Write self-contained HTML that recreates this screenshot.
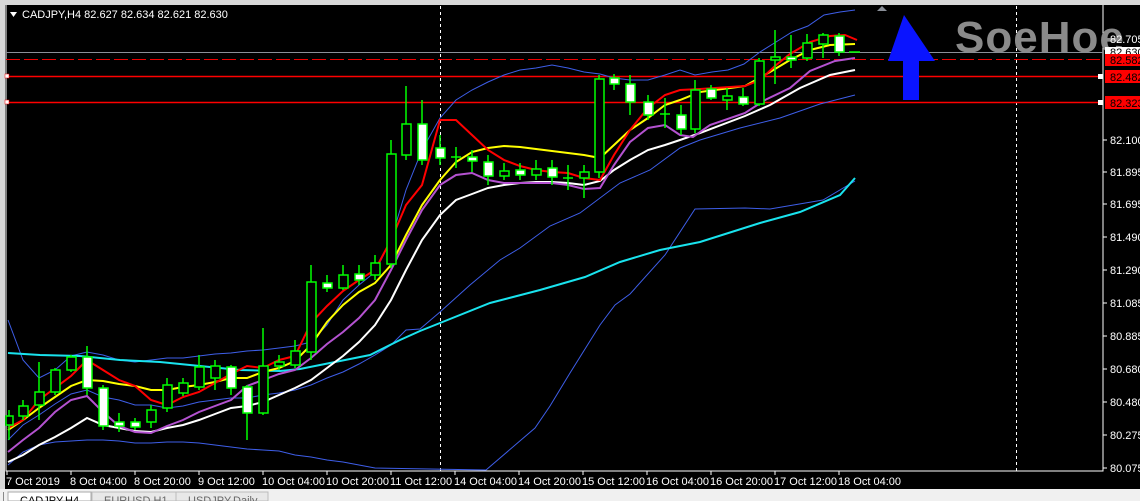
<!DOCTYPE html>
<html><head><meta charset="utf-8"><style>
html,body{margin:0;padding:0;width:1140px;height:501px;overflow:hidden;background:#f0f0f0;}
svg{display:block;font-family:"Liberation Sans",sans-serif;}
</style></head><body>
<svg width="1140" height="501" viewBox="0 0 1140 501" xmlns="http://www.w3.org/2000/svg">
<rect x="0" y="0" width="1140" height="501" fill="#d8d8d8"/>
<rect x="5" y="5" width="1135" height="484" fill="#000"/>
<!-- frame -->
<polyline points="6,5 6,471 1103,471 1103,5" fill="none" stroke="#fff" stroke-width="1"/>
<!-- dashed verticals -->
<line x1="440.5" y1="6" x2="440.5" y2="471" stroke="#fff" stroke-dasharray="3,3"/>
<line x1="1016.5" y1="6" x2="1016.5" y2="471" stroke="#fff" stroke-dasharray="3,3"/>
<!-- horizontal lines -->
<line x1="6" y1="52.5" x2="1103" y2="52.5" stroke="#8a8f98"/>
<line x1="6" y1="59.5" x2="1103" y2="59.5" stroke="#e00" stroke-dasharray="14,4"/>
<line x1="6" y1="76.5" x2="1103" y2="76.5" stroke="#f00" stroke-width="1.5"/>
<line x1="6" y1="102.5" x2="1103" y2="102.5" stroke="#f00" stroke-width="1.5"/>
<rect x="5" y="74" width="4" height="4" fill="#fff" stroke="#f00" stroke-width="0.5"/>
<rect x="5" y="100" width="4" height="4" fill="#fff" stroke="#f00" stroke-width="0.5"/>
<rect x="1098" y="74" width="5" height="5" fill="#fff"/>
<rect x="1098" y="100" width="5" height="5" fill="#fff"/>
<!-- logo -->
<text x="955" y="52" font-size="44" font-weight="bold" fill="#8a8a8a" letter-spacing="1">SoeHoe</text>
<polygon points="882,6 887,11 877,11" fill="#8a8f98"/>
<!-- arrow -->
<polygon points="904,15 888,61 935,61" fill="#0a14ff"/>
<rect x="903" y="60" width="16" height="40" fill="#0a14ff"/>
<!-- bollinger blue lines -->
<polyline fill="none" stroke="#3e5ee8" stroke-width="1" points="8,320 23,360 39,378 55,370 71,356 87,352 103,355 119,360 135,362 151,360 167,358 183,358 199,356 215,354 231,353 247,351 263,350 279,348 295,346 311,342 327,325 343,300 359,285 375,272 391,240 406,190 422,150 440,118 456,100 472,90 488,82 504,75 520,70 536,68 552,65 568,68 584,72 600,74 614,78 630,80 648,80 665,75 680,70 695,75 712,72 728,70 744,64 760,52 776,42 792,32 808,26 824,15 840,12 855,10"/>
<polyline fill="none" stroke="#3e5ee8" stroke-width="1" points="8,440 23,425 39,415 55,404 71,394 87,390 103,397 119,400 135,405 151,405 167,408 183,406 199,402 215,400 231,398 247,398 263,395 279,393 295,390 311,385 327,378 343,372 359,364 375,355 391,345 406,330 420,329 440,312 470,285 500,260 520,248 550,226 580,213 620,183 650,170 680,148 700,140 740,128 780,118 820,104 855,95"/>
<polyline fill="none" stroke="#3e5ee8" stroke-width="1" points="8,465 23,452 39,445 55,442 71,441 87,440 103,440 119,441 135,443 151,443 167,442 183,442 199,443 215,445 231,447 247,449 263,450 279,451 295,455 311,457 327,460 343,462 359,465 375,468 486,470 535,428 550,406 570,373 600,325 615,305 630,294 665,255 695,209 745,208 770,209 823,200 855,181"/>
<!-- cyan -->
<polyline fill="none" stroke="#19e3ee" stroke-width="2" points="8,353 40,355 80,356 120,360 160,362 200,366 240,370 280,371 300,369 330,363 370,355 400,340 420,331 440,323 490,303 540,290 585,277 620,262 660,250 700,242 760,223 800,212 840,195 855,178"/>
<!-- white -->
<polyline fill="none" stroke="#fff" stroke-width="2" points="8,462 23,455 39,445 55,437 71,428 87,418 103,425 119,428 135,431 151,432 167,428 183,425 199,420 215,414 231,408 247,406 263,402 279,395 295,388 311,380 327,368 343,356 359,342 375,325 391,300 406,270 422,240 440,215 456,200 472,194 488,188 504,185 520,183 536,182 552,182 568,183 584,185 600,181 614,170 630,160 648,150 665,145 680,140 700,133 745,116 770,105 800,88 830,75 855,70"/>
<!-- purple -->
<polyline fill="none" stroke="#b452d0" stroke-width="2" points="8,452 23,440 39,428 55,412 71,400 87,396 103,412 119,426 135,432 151,433 167,426 183,420 199,412 215,406 231,400 247,386 263,380 279,374 295,370 311,358 327,344 343,332 359,318 375,300 391,270 406,240 422,210 440,185 456,175 472,173 488,180 504,183 520,183 536,183 552,183 568,185 584,189 600,188 614,165 630,142 648,128 665,125 680,135 693,137 710,125 745,113 765,100 790,88 810,71 835,61 855,58"/>
<!-- yellow -->
<polyline fill="none" stroke="#ffff00" stroke-width="2" points="8,430 23,420 39,408 55,397 71,386 87,380 103,381 119,384 135,386 151,390 167,390 183,387 199,385 215,382 231,378 247,378 263,372 279,368 295,361 311,345 327,322 343,305 359,292 375,283 391,265 406,235 422,205 440,180 456,162 472,152 488,148 504,146 520,147 536,149 552,151 568,153 584,155 600,158 614,145 630,130 648,118 665,105 680,100 700,92 745,86 770,72 790,60 810,50 830,45 855,44"/>
<!-- red -->
<polyline fill="none" stroke="#ff0000" stroke-width="2" points="8,428 23,420 39,400 55,388 71,376 87,360 103,370 119,380 135,386 151,400 167,405 183,397 199,392 215,383 231,374 247,366 263,368 279,360 295,356 311,323 327,306 343,291 359,280 375,270 391,240 406,205 422,185 440,120 456,120 472,135 488,150 504,160 520,166 536,170 552,172 568,173 584,178 600,180 614,155 630,130 648,108 665,95 680,90 700,89 745,86 760,80 775,66 790,54 810,42 830,36 845,35 857,40"/>
<!-- candles -->
<g stroke="#00ff00" stroke-width="1.5">
<line x1="9" y1="410" x2="9" y2="440"/><rect x="6" y="416" width="7" height="9" fill="#000"/>
<line x1="23" y1="400" x2="23" y2="420"/><rect x="19" y="406" width="9" height="10" fill="#000"/>
<line x1="39" y1="362" x2="39" y2="420"/><rect x="35" y="392" width="9" height="13" fill="#000"/>
<line x1="55" y1="368" x2="55" y2="395"/><rect x="51" y="370" width="9" height="22" fill="#000"/>
<line x1="71" y1="355" x2="71" y2="372"/><rect x="67" y="357" width="9" height="13" fill="#000"/>
<line x1="87" y1="346" x2="87" y2="395"/><rect x="83" y="357" width="9" height="31" fill="#fff"/>
<line x1="103" y1="385" x2="103" y2="430"/><rect x="99" y="388" width="9" height="38" fill="#fff"/>
<line x1="119" y1="413" x2="119" y2="432"/><rect x="115" y="422" width="9" height="4" fill="#fff"/>
<line x1="135" y1="418" x2="135" y2="430"/><rect x="131" y="422" width="9" height="5" fill="#fff"/>
<line x1="151" y1="405" x2="151" y2="428"/><rect x="147" y="410" width="9" height="12" fill="#000"/>
<line x1="167" y1="378" x2="167" y2="412"/><rect x="163" y="385" width="9" height="23" fill="#000"/>
<line x1="183" y1="378" x2="183" y2="396"/><rect x="179" y="383" width="9" height="10" fill="#000"/>
<line x1="199" y1="355" x2="199" y2="390"/><rect x="195" y="367" width="9" height="20" fill="#000"/>
<line x1="215" y1="360" x2="215" y2="390"/><rect x="211" y="366" width="9" height="12" fill="#000"/>
<line x1="231" y1="365" x2="231" y2="395"/><rect x="227" y="367" width="9" height="21" fill="#fff"/>
<line x1="247" y1="385" x2="247" y2="440"/><rect x="243" y="387" width="9" height="26" fill="#fff"/>
<line x1="263" y1="328" x2="263" y2="415"/><rect x="259" y="366" width="9" height="47" fill="#000"/>
<line x1="279" y1="355" x2="279" y2="370"/><rect x="275" y="362" width="9" height="4" fill="#000"/>
<line x1="295" y1="340" x2="295" y2="368"/><rect x="291" y="351" width="9" height="14" fill="#000"/>
<line x1="311" y1="265" x2="311" y2="360"/><rect x="307" y="282" width="9" height="70" fill="#000"/>
<line x1="327" y1="275" x2="327" y2="292"/><rect x="323" y="283" width="9" height="5" fill="#fff"/>
<line x1="343" y1="265" x2="343" y2="290"/><rect x="339" y="275" width="9" height="13" fill="#000"/>
<line x1="359" y1="265" x2="359" y2="285"/><rect x="355" y="274" width="9" height="6" fill="#fff"/>
<line x1="375" y1="255" x2="375" y2="280"/><rect x="371" y="263" width="9" height="12" fill="#000"/>
<line x1="391" y1="140" x2="391" y2="268"/><rect x="387" y="154" width="9" height="110" fill="#000"/>
<line x1="406" y1="86" x2="406" y2="160"/><rect x="402" y="124" width="9" height="31" fill="#000"/>
<line x1="422" y1="100" x2="422" y2="165"/><rect x="418" y="124" width="9" height="36" fill="#fff"/>
<line x1="440" y1="135" x2="440" y2="165"/><rect x="436" y="148" width="9" height="10" fill="#fff"/>
<line x1="456" y1="147" x2="456" y2="168"/><line x1="451" y1="157" x2="461" y2="157"/>
<line x1="472" y1="150" x2="472" y2="172"/><rect x="468" y="157" width="9" height="4" fill="#fff"/>
<line x1="488" y1="155" x2="488" y2="185"/><rect x="484" y="162" width="9" height="14" fill="#fff"/>
<line x1="504" y1="163" x2="504" y2="180"/><rect x="500" y="171" width="9" height="5" fill="#000"/>
<line x1="520" y1="163" x2="520" y2="180"/><rect x="516" y="170" width="9" height="5" fill="#fff"/>
<line x1="536" y1="160" x2="536" y2="180"/><rect x="532" y="169" width="9" height="6" fill="#000"/>
<line x1="552" y1="160" x2="552" y2="185"/><rect x="548" y="168" width="9" height="9" fill="#fff"/>
<line x1="568" y1="165" x2="568" y2="190"/><line x1="563" y1="178" x2="573" y2="178"/>
<line x1="584" y1="165" x2="584" y2="198"/><rect x="580" y="172" width="9" height="6" fill="#000"/>
<line x1="599" y1="75" x2="599" y2="178"/><rect x="595" y="79" width="9" height="93" fill="#000"/>
<line x1="614" y1="74" x2="614" y2="90"/><rect x="610" y="78" width="9" height="6" fill="#fff"/>
<line x1="630" y1="75" x2="630" y2="115"/><rect x="626" y="84" width="9" height="18" fill="#fff"/>
<line x1="648" y1="95" x2="648" y2="120"/><rect x="644" y="102" width="9" height="13" fill="#fff"/>
<line x1="665" y1="98" x2="665" y2="128"/><line x1="660" y1="114" x2="670" y2="114"/>
<line x1="681" y1="105" x2="681" y2="135"/><rect x="677" y="115" width="9" height="14" fill="#fff"/>
<line x1="695" y1="80" x2="695" y2="133"/><rect x="691" y="90" width="9" height="39" fill="#000"/>
<line x1="711" y1="85" x2="711" y2="100"/><rect x="707" y="89" width="9" height="9" fill="#fff"/>
<line x1="727" y1="88" x2="727" y2="110"/><rect x="723" y="96" width="9" height="4" fill="#000"/>
<line x1="743" y1="88" x2="743" y2="106"/><rect x="739" y="97" width="9" height="7" fill="#fff"/>
<line x1="759" y1="58" x2="759" y2="106"/><rect x="755" y="61" width="9" height="43" fill="#000"/>
<line x1="775" y1="30" x2="775" y2="84"/><rect x="771" y="57" width="9" height="3" fill="#000"/>
<line x1="791" y1="35" x2="791" y2="68"/><rect x="787" y="57" width="9" height="3" fill="#fff"/>
<line x1="807" y1="34" x2="807" y2="61"/><rect x="803" y="43" width="9" height="15" fill="#000"/>
<line x1="823" y1="33" x2="823" y2="58"/><rect x="819" y="35" width="9" height="9" fill="#000"/>
<line x1="839" y1="33" x2="839" y2="56"/><rect x="835" y="36" width="9" height="16" fill="#fff"/>
<line x1="849" y1="52" x2="860" y2="52"/>
</g>
<!-- title -->
<polygon points="10,12 17,12 13.5,17" fill="#fff"/>
<text x="22" y="18" font-size="11" fill="#fff">CADJPY,H4  82.627 82.634 82.621 82.630</text>
<!-- price axis -->
<g fill="#fff" font-size="11" stroke="none">
<text x="1110" y="43">82.705</text>
<text x="1110" y="144">82.100</text>
<text x="1110" y="176">81.895</text>
<text x="1110" y="208">81.695</text>
<text x="1110" y="241">81.490</text>
<text x="1110" y="274">81.290</text>
<text x="1110" y="307">81.085</text>
<text x="1110" y="340">80.885</text>
<text x="1110" y="373">80.680</text>
<text x="1110" y="406">80.480</text>
<text x="1110" y="439">80.275</text>
<text x="1110" y="472">80.075</text>
</g>
<g stroke="#fff">
<line x1="1103" y1="140" x2="1107" y2="140"/><line x1="1103" y1="172" x2="1107" y2="172"/><line x1="1103" y1="204" x2="1107" y2="204"/><line x1="1103" y1="237" x2="1107" y2="237"/><line x1="1103" y1="270" x2="1107" y2="270"/><line x1="1103" y1="303" x2="1107" y2="303"/><line x1="1103" y1="336" x2="1107" y2="336"/><line x1="1103" y1="369" x2="1107" y2="369"/><line x1="1103" y1="402" x2="1107" y2="402"/><line x1="1103" y1="435" x2="1107" y2="435"/><line x1="1103" y1="468" x2="1107" y2="468"/>
</g>
<rect x="1105" y="47" width="35" height="10" fill="#fff"/>
<text x="1110" y="56" font-size="11" fill="#000">82.630</text>
<rect x="1105" y="54" width="35" height="12" fill="#f00"/>
<text x="1110" y="64" font-size="11" fill="#000">82.582</text>
<rect x="1105" y="70" width="35" height="13" fill="#f00"/>
<text x="1110" y="81" font-size="11" fill="#000">82.482</text>
<rect x="1105" y="96" width="35" height="13" fill="#f00"/>
<text x="1110" y="107" font-size="11" fill="#000">82.323</text>
<!-- time axis -->
<g stroke="#fff">
<line x1="7" y1="471" x2="7" y2="475"/><line x1="71" y1="471" x2="71" y2="475"/><line x1="135" y1="471" x2="135" y2="475"/><line x1="199" y1="471" x2="199" y2="475"/><line x1="263" y1="471" x2="263" y2="475"/><line x1="327" y1="471" x2="327" y2="475"/><line x1="391" y1="471" x2="391" y2="475"/><line x1="455" y1="471" x2="455" y2="475"/><line x1="519" y1="471" x2="519" y2="475"/><line x1="583" y1="471" x2="583" y2="475"/><line x1="647" y1="471" x2="647" y2="475"/><line x1="711" y1="471" x2="711" y2="475"/><line x1="775" y1="471" x2="775" y2="475"/><line x1="839" y1="471" x2="839" y2="475"/>
</g>
<g fill="#fff" font-size="11">
<text x="6" y="485">7 Oct 2019</text>
<text x="70" y="485">8 Oct 04:00</text>
<text x="134" y="485">8 Oct 20:00</text>
<text x="198" y="485">9 Oct 12:00</text>
<text x="262" y="485">10 Oct 04:00</text>
<text x="326" y="485">10 Oct 20:00</text>
<text x="390" y="485">11 Oct 12:00</text>
<text x="454" y="485">14 Oct 04:00</text>
<text x="518" y="485">14 Oct 20:00</text>
<text x="582" y="485">15 Oct 12:00</text>
<text x="646" y="485">16 Oct 04:00</text>
<text x="710" y="485">16 Oct 20:00</text>
<text x="774" y="485">17 Oct 12:00</text>
<text x="838" y="485">18 Oct 04:00</text>
</g>
<!-- tabs -->
<rect x="0" y="489" width="1140" height="12" fill="#f0f0f0"/>
<rect x="3" y="492" width="1" height="9" fill="#888"/>
<rect x="8" y="492" width="83" height="9" fill="#fff" stroke="#aaa"/>
<rect x="92" y="492" width="84" height="9" fill="#e8e8e8" stroke="#bbb"/>
<rect x="176" y="492" width="92" height="9" fill="#e8e8e8" stroke="#bbb"/>
<g font-size="11">
<text x="20" y="504" fill="#000">CADJPY,H4</text>
<text x="104" y="504" fill="#666">EURUSD,H1</text>
<text x="188" y="504" fill="#666">USDJPY,Daily</text>
</g>
</svg>
</body></html>
